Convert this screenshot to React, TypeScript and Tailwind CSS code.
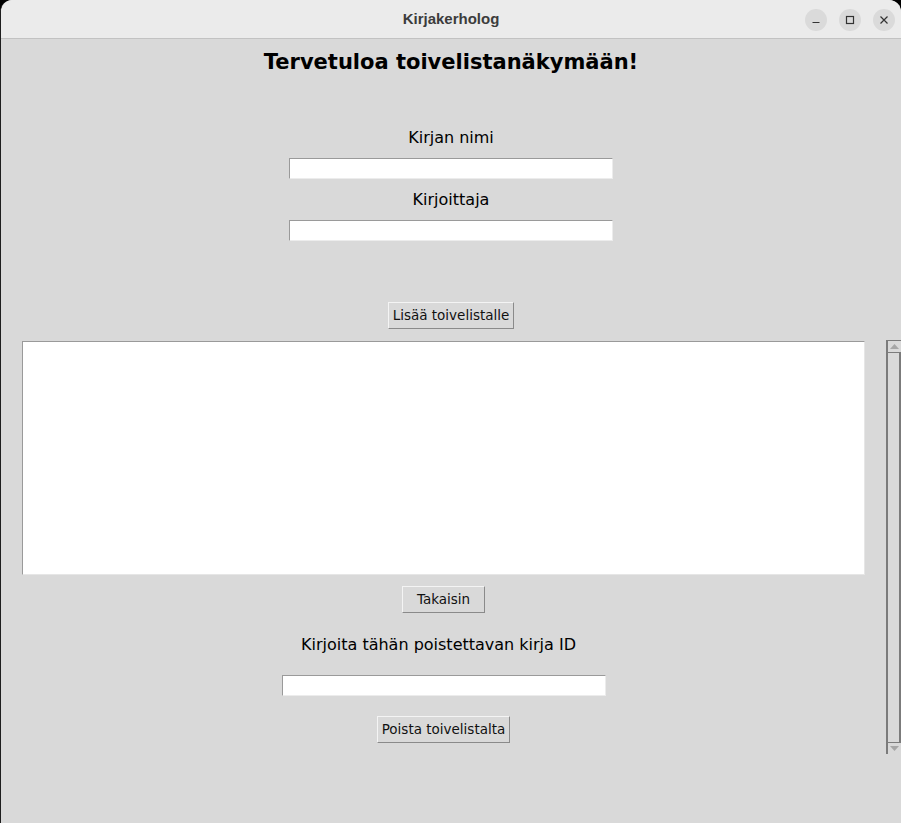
import React from "react"

const font = { fontFamily: '"DejaVu Sans", "Liberation Sans", sans-serif' }

const Entry = ({ className = "" }: { className?: string }) => (
  <input
    type="text"
    className={[
      "h-[21px] w-[324px] bg-white outline-none",
      "border border-t-[#9a9a9a] border-l-[#9a9a9a] border-b-[#ececec] border-r-[#ececec]",
      className,
    ].join(" ")}
  />
)

const TkButton = ({ label, width, className = "" }: { label: string; width: string; className?: string }) => (
  <button
    className={[
      "h-[27px] bg-[#d9d9d9] text-[13.5px] text-[#111] leading-none",
      "border border-t-[#f4f4f4] border-l-[#f4f4f4] border-b-[#8a8a8a] border-r-[#8a8a8a]",
      width,
      className,
    ].join(" ")}
    style={font}
  >
    {label}
  </button>
)

const Circle = ({ children }: { children: React.ReactNode }) => (
  <div className="w-[22px] h-[22px] rounded-full bg-[#dadada] flex items-center justify-center text-[#333]">
    {children}
  </div>
)

const Scrollbar = () => (
  <div className="w-[15px] h-[414px] flex flex-col bg-[#d9d9d9] border-l-2 border-t border-[#7b7b7b]">
    <div className="h-[12px] flex items-center justify-center border-b border-[#7b7b7b]">
      <svg width="9" height="5" viewBox="0 0 9 5">
        <path d="M0 5 L4.5 0 L9 5 Z" fill="#a6a6a6" />
      </svg>
    </div>
    <div className="flex-1 border-r-2 border-[#7b7b7b] ml-[1px]" />
    <div className="h-[12px] flex items-center justify-center border-t border-[#7b7b7b]">
      <svg width="9" height="5" viewBox="0 0 9 5">
        <path d="M0 0 L4.5 5 L9 0 Z" fill="#a6a6a6" />
      </svg>
    </div>
  </div>
)

export default function App() {
  return (
    <div className="w-[901px] h-[823px] bg-black overflow-hidden">
      <div className="h-full rounded-t-[12px] overflow-hidden bg-[#d9d9d9] border-l border-[#1e1e1e] flex flex-col">
        {/* title bar */}
        <div className="h-[39px] shrink-0 bg-[#ebebeb] border-b border-[#c2c2c2] grid grid-cols-[1fr_auto_1fr] items-center">
          <div />
          <div
            className="text-[15px] font-bold text-[#3c3c3c] pt-[1px]"
            style={{ fontFamily: '"Liberation Sans", "DejaVu Sans", sans-serif' }}
          >
            Kirjakerholog
          </div>
          <div className="flex justify-end gap-[12px] pr-[6px] pt-[1px]">
            <Circle>
              <svg width="10" height="10" viewBox="0 0 10 10">
                <path d="M1.5 7.5 H8.5" stroke="#333" strokeWidth="1.2" />
              </svg>
            </Circle>
            <Circle>
              <svg width="10" height="10" viewBox="0 0 10 10">
                <rect x="1.5" y="1.5" width="7" height="7" fill="none" stroke="#333" strokeWidth="1.2" />
              </svg>
            </Circle>
            <Circle>
              <svg width="10" height="10" viewBox="0 0 10 10">
                <path d="M1.5 1.5 L8.5 8.5 M8.5 1.5 L1.5 8.5" stroke="#333" strokeWidth="1.2" />
              </svg>
            </Circle>
          </div>
        </div>

        {/* content */}
        <div className="flex flex-col items-center text-black" style={font}>
          <h1 className="mt-[11px] text-[21px] leading-[25px] font-bold">Tervetuloa toivelistanäkymään!</h1>

          <div className="mt-[53px] text-[16px] leading-[20px]">Kirjan nimi</div>
          <Entry className="mt-[10px]" />
          <div className="mt-[11px] text-[16px] leading-[20px]">Kirjoittaja</div>
          <Entry className="mt-[10px]" />

          <TkButton label="Lisää toivelistalle" width="w-[126px]" className="mt-[61px]" />
        </div>

        <div className="mt-[11px] flex pl-[21px]" style={font}>
          <div className="w-[843px] flex flex-col items-center">
            <div className="mt-[1px] w-full h-[234px] bg-white border border-t-[#9a9a9a] border-l-[#9a9a9a] border-b-[#e6e6e6] border-r-[#e6e6e6]" />
            <TkButton label="Takaisin" width="w-[83px]" className="mt-[11px]" />
            <div className="mt-[22px] pr-[10px] text-[16px] leading-[20px] text-black">
              Kirjoita tähän poistettavan kirja ID
            </div>
            <Entry className="mt-[20px]" />
            <TkButton label="Poista toivelistalta" width="w-[133px]" className="mt-[20px]" />
          </div>
          <div className="ml-[21px]">
            <Scrollbar />
          </div>
        </div>
      </div>
    </div>
  )
}
